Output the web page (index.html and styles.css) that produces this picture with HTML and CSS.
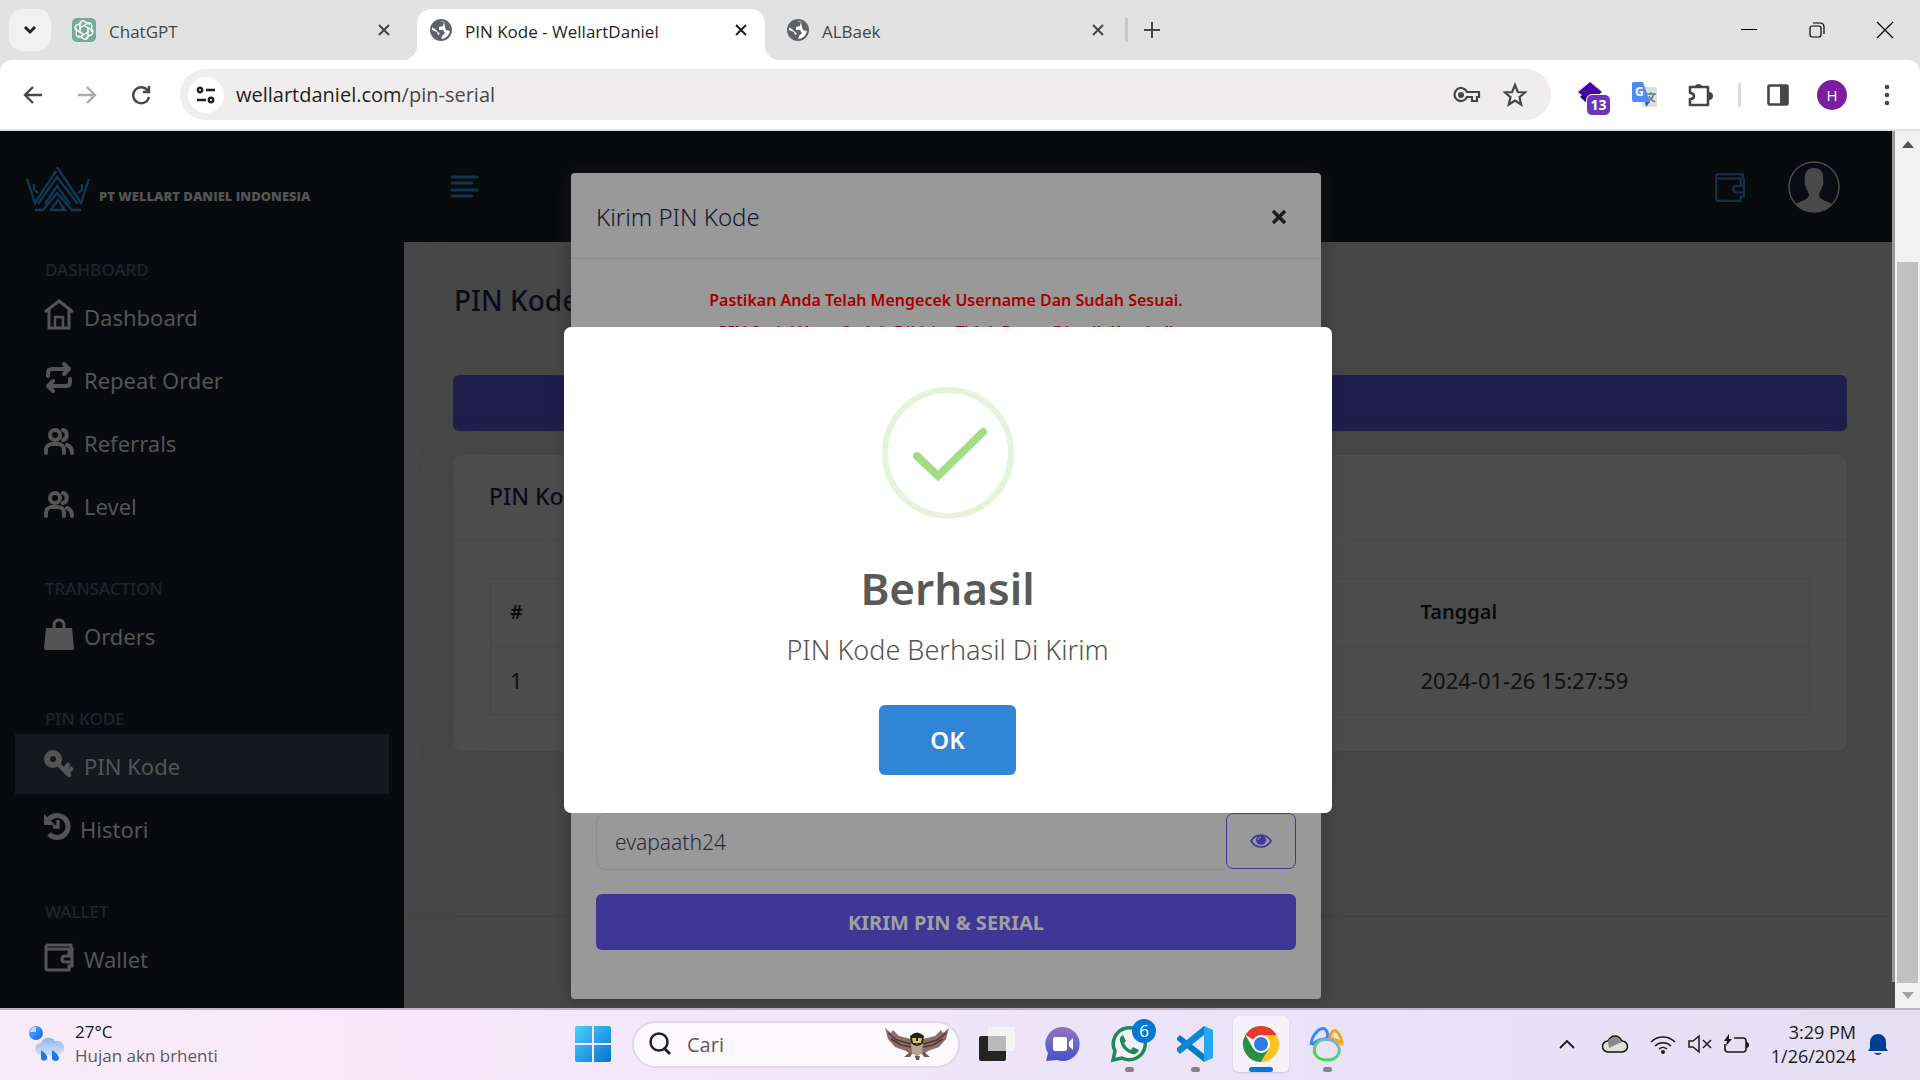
FILE: index.html
```html
<!DOCTYPE html>
<html lang="id">
<head>
<meta charset="utf-8">
<title>PIN Kode - WellartDaniel</title>
<link rel="stylesheet" href="styles.css">
</head>
<body>
<svg class="defs" width="0" height="0" aria-hidden="true">
  <symbol id="globe" viewBox="0 0 22 22"><circle cx="11" cy="11" r="10" fill="#fff" stroke="#5f6368" stroke-width="2"/><path d="M2 8C3 4 7 1 10 2L14 3 13 7 9 8 9 11 13 11 15 14 12 17 11 21C5 21 1 17 2 11L7 13 8 16 10 15 6 11ZM14 2C18 4 21 8 20 12L16 11 15 8Z" fill="#5f6368"/></symbol>
  <symbol id="cross" viewBox="0 0 20 20"><path d="M5 5 15 15M15 5 5 15" fill="none" stroke="currentColor" stroke-width="2"/></symbol>
  <symbol id="users" viewBox="0 0 30 28"><g fill="none" stroke="currentColor" stroke-width="4" stroke-linecap="round"><circle cx="11" cy="8" r="5"/><path d="M2 26v-3c0-4 3-6 6-6h6c3 0 6 2 6 6v3M19 3c5 1 5 9 0 10M23 18c3 1 5 3 5 8"/></g></symbol>
  <symbol id="wallet" viewBox="0 0 30 30"><path d="M27 7V3H4Q2 3 2 5V26Q2 28 4 28H25V24H28V7H2M25 8v6M28 14H21q-3 0-3 3t3 3h7" fill="none" stroke="currentColor"/></symbol>
</svg>

<header class="browser">
  <div class="tabstrip">
    <button class="tab-search" aria-label="Cari tab"><svg width="16" height="12" viewBox="0 0 16 12"><path d="M3 3 8 8 13 3" fill="none" stroke="#1f1f1f" stroke-width="3"/></svg></button>
    <div class="tab tab-first">
      <svg width="24" height="24" viewBox="0 0 24 24"><rect width="24" height="24" rx="5" fill="#75ab9b"/><g fill="none" stroke="#fff" stroke-width="1.4"><path id="petal" d="M12 7.5 8 9.800V5.500C8 2.500 12 1.800 13.600 4.200L17.500 6.500"/><use href="#petal" transform="rotate(60 12 12)"/><use href="#petal" transform="rotate(120 12 12)"/><use href="#petal" transform="rotate(180 12 12)"/><use href="#petal" transform="rotate(240 12 12)"/><use href="#petal" transform="rotate(300 12 12)"/></g></svg>
      <span class="tab-label">ChatGPT</span>
      <button class="tab-close" aria-label="Tutup"><svg width="20" height="20"><use href="#cross"/></svg></button>
    </div>
    <div class="tab tab-active">
      <svg width="22" height="22"><use href="#globe"/></svg>
      <span class="tab-label">PIN Kode - WellartDaniel</span>
      <button class="tab-close" aria-label="Tutup"><svg width="20" height="20"><use href="#cross"/></svg></button>
    </div>
    <div class="tab tab-last">
      <svg width="22" height="22"><use href="#globe"/></svg>
      <span class="tab-label">ALBaek</span>
      <button class="tab-close" aria-label="Tutup"><svg width="20" height="20"><use href="#cross"/></svg></button>
    </div>
    <span class="divider"></span>
    <button class="new-tab" aria-label="Tab baru"><svg width="18" height="18" viewBox="0 0 18 18"><path d="M9 1v16M1 9h16" stroke="#444746" stroke-width="2"/></svg></button>
    <div class="window-controls">
      <button aria-label="Kecilkan"><svg width="16" height="16" viewBox="0 0 16 16"><path d="M0 7.500h16" stroke="#000"/></svg></button>
      <button aria-label="Pulihkan"><svg width="16" height="16" viewBox="0 0 16 16"><g fill="none" stroke="#000" stroke-width="1.200"><rect x="1" y="4" width="11" height="11" rx="2"/><path d="M4 1H11Q15 1 15 5V12"/></g></svg></button>
      <button aria-label="Tutup jendela"><svg width="16" height="16" viewBox="0 0 16 16"><path d="M0 0 16 16M16 0 0 16" stroke="#000" stroke-width="1.200"/></svg></button>
    </div>
  </div>
  <div class="toolbar">
    <div class="nav-buttons">
      <button aria-label="Kembali"><svg width="20" height="20" viewBox="0 0 20 20"><path d="M19 10H3M10 2 2 10 10 18" fill="none" stroke="#444746" stroke-width="2.400"/></svg></button>
      <button aria-label="Maju"><svg width="20" height="20" viewBox="0 0 20 20"><path d="M1 10H17M10 2 18 10 10 18" fill="none" stroke="#ababab" stroke-width="2.400"/></svg></button>
      <button aria-label="Muat ulang"><svg width="20" height="20" viewBox="0 0 20 20"><path d="M17 6A8 8 0 1 0 18 12M18 1V7H12" fill="none" stroke="#444746" stroke-width="2.400"/></svg></button>
    </div>
    <div class="omnibox">
      <button class="site-info" aria-label="Info situs"><svg width="20" height="18" viewBox="0 0 20 18"><g fill="none" stroke="#1f1f1f" stroke-width="2.400"><circle cx="4" cy="4" r="2.200"/><path d="M10 4h9M1 14h9"/><circle cx="15" cy="14" r="2.200"/></g></svg></button>
      <div class="url">wellartdaniel.com<span>/pin-serial</span></div>
      <button aria-label="Sandi"><svg width="28" height="18" viewBox="0 0 28 18"><path d="M14 6H26V11H24V15H19V11H14A6.500 6.500 0 1 1 14 6Z" fill="none" stroke="#444746" stroke-width="2.200"/><circle cx="8" cy="9" r="3" fill="#444746"/></svg></button>
      <button aria-label="Markah"><svg width="24" height="24" viewBox="0 0 24 24"><path d="M12 2 14.800 9 22 9.500 16.500 14.200 18.200 21.500 12 17.500 5.800 21.500 7.500 14.200 2 9.500 9.200 9Z" fill="none" stroke="#444746" stroke-width="2.200"/></svg></button>
    </div>
    <div class="extensions">
      <button class="ext-badge" aria-label="Ekstensi"><svg width="26" height="26" viewBox="0 0 26 26"><path d="M2 15 12 24 22 15 20 13H4Z" fill="#200a63"/><path d="M12 0 24 10 12 20 0 10Z" fill="#4506a8"/></svg><span>13</span></button>
      <button aria-label="Terjemahan"><svg width="26" height="26" viewBox="0 0 26 26"><rect x="10" y="5" width="15" height="20" rx="1" fill="#dedede"/><path d="M15 12h9M19 10v2M22 12c-1 4-4 6-6 8M17 14c1 3 4 5 6 6" stroke="#607d8b" stroke-width="1.500" fill="none"/><path d="M1 0H11L18 20H2Q0 20 0 18V1Z" fill="#4f8df5"/><path d="M13 20H18L14 25Z" fill="#3757c4"/><text x="3" y="14" class="g-letter">G</text></svg></button>
      <button aria-label="Puzzle"><svg width="26" height="26" viewBox="0 0 26 26"><path d="M3 5H21V23H3V17Q7 17 7 14 7 11 3 11Z" fill="none" stroke="#444746" stroke-width="2.600" stroke-linejoin="round"/><path d="M8 4a4 4 0 0 1 7 0ZM22 10a4 4 0 0 1 0 8Z" fill="#444746"/></svg></button>
      <span class="divider"></span>
      <button aria-label="Panel samping"><svg width="22" height="22" viewBox="0 0 22 22"><rect x="1.500" y="1.500" width="19" height="19" rx="1" fill="none" stroke="#444746" stroke-width="2.600"/><path d="M13 1h8v20h-8z" fill="#444746"/></svg></button>
      <button class="profile" aria-label="Profil">H</button>
      <button aria-label="Menu"><svg width="6" height="22" viewBox="0 0 6 22"><g fill="#444746"><circle cx="3" cy="3" r="2.300"/><circle cx="3" cy="11" r="2.300"/><circle cx="3" cy="19" r="2.300"/></g></svg></button>
    </div>
  </div>
</header>

<div class="viewport">
  <div class="page">
    <nav class="sidebar">
      <a class="brand" href="#">
        <svg width="64" height="46" viewBox="0 0 64 46"><g fill="none" stroke="#103a54" stroke-width="2.300"><path d="M1 13 9 37 30 5M31 1 55 37 63 13"/><path d="M8 18V24L12 27M56 18V24L52 27"/><path d="M12 38 31 11 52 38M19 38 31 20 44 38"/><path d="M9 44H17L31 27 46 44H55M25 44 32 34 39 44Z"/></g></svg>
        <span>PT WELLART DANIEL INDONESIA</span>
      </a>
      <h6>DASHBOARD</h6>
      <ul>
        <li><a href="#"><svg width="30" height="32" viewBox="0 0 30 32"><g fill="none" stroke="currentColor" stroke-width="3"><path d="M1 13 15 2 29 13M5 11V29H25V11"/><path d="M11 29V18H19V29" stroke-width="2.500"/></g></svg>Dashboard</a></li>
        <li><a href="#"><svg width="30" height="32" viewBox="0 0 30 32"><g fill="none" stroke="currentColor" stroke-width="4" stroke-linecap="round" stroke-linejoin="round"><path d="M4 14V11Q4 7 8 7H25M20 2 25 7 20 12M26 17v3q0 4-4 4H4M9 19 4 24 9 29"/></g></svg>Repeat Order</a></li>
        <li><a href="#"><svg width="30" height="28"><use href="#users"/></svg>Referrals</a></li>
        <li><a href="#"><svg width="30" height="28"><use href="#users"/></svg>Level</a></li>
      </ul>
      <h6>TRANSACTION</h6>
      <ul>
        <li><a href="#"><svg width="30" height="32" viewBox="0 0 30 32"><path d="M2 10H28L30 30Q30 32 28 32H2Q0 32 0 30Z" fill="currentColor"/><path d="M10 14V8q0-6 5-6t5 6v6" fill="none" stroke="currentColor" stroke-width="3"/></svg>Orders</a></li>
      </ul>
      <h6>PIN KODE</h6>
      <ul>
        <li><a class="active" href="#"><svg width="30" height="32" viewBox="0 0 30 32"><g stroke="currentColor" fill="none"><circle cx="9" cy="11" r="6" stroke-width="6"/><path d="M14 16 25 27M21 21 24 17M24 24 27 21" stroke-width="4.500" stroke-linecap="round"/></g></svg>PIN Kode</a></li>
        <li><a href="#"><svg width="26" height="32" viewBox="0 0 26 32"><path d="M5 23A11 11 0 1 0 5 8" fill="none" stroke="currentColor" stroke-width="5"/><path d="M0 3V14H11Z" fill="currentColor"/><path d="M14 9v7H9" fill="none" stroke="currentColor" stroke-width="3.500"/></svg>Histori</a></li>
      </ul>
      <h6>WALLET</h6>
      <ul>
        <li><a href="#"><svg class="bold-icon" width="30" height="30"><use href="#wallet"/></svg>Wallet</a></li>
      </ul>
    </nav>

    <main class="content">
      <div class="topbar">
        <button aria-label="Menu"><svg width="28" height="24" viewBox="0 0 28 24"><path d="M1 2H26M1 8H21M1 15H26M1 21H21" stroke="#10354c" stroke-width="3" stroke-linecap="round"/></svg></button>
        <a class="topbar-wallet" href="#" aria-label="Wallet"><svg width="32" height="32"><use href="#wallet"/></svg></a>
        <a class="avatar" href="#" aria-label="Akun"><svg width="52" height="52" viewBox="0 0 52 52"><circle cx="26" cy="26" r="25" fill="#0b0b15" stroke="#4a4a4a" stroke-width="1.500"/><path d="M26 7C18 7 16 13 17 20 16 21 17 25 18 26 19 30 21 32 21 34 21 39 10 41 8 43A25 25 0 0 0 44 43C42 41 31 39 31 34 31 32 33 30 34 26 35 25 36 21 35 20 36 13 34 7 26 7Z" fill="#4a4a4a"/></svg></a>
      </div>
      <h1>PIN Kode</h1>
      <button class="send-bar" aria-label="Kirim PIN"></button>
      <section class="card">
        <h2>PIN Kode</h2>
        <div class="card-body">
          <table>
            <thead><tr><th class="col-num">#</th><th></th><th class="col-date">Tanggal</th></tr></thead>
            <tbody><tr><td>1</td><td></td><td>2024-01-26 15:27:59</td></tr></tbody>
          </table>
        </div>
      </section>
      <footer></footer>
    </main>

    <div class="layer">
      <section class="modal">
        <div class="modal-head"><h3>Kirim PIN Kode</h3><button class="modal-close" aria-label="Tutup"><svg width="20" height="20" viewBox="0 0 20 20"><path d="M4 4 16 16M16 4 4 16" stroke="#1c1c1c" stroke-width="3.500"/></svg></button></div>
        <div class="modal-body">
          <p class="warning">Pastikan Anda Telah Mengecek Username Dan Sudah Sesuai.<br>PIN Serial Yang Sudah Dikirim Tidak Dapat Ditarik Kembali</p>
          <div class="field">
            <input type="text" aria-label="Username" value="evapaath24">
            <button class="eye" aria-label="Cek username"><svg width="22" height="16" viewBox="0 0 22 16"><path d="M1 8C6 0 16 0 21 8 16 16 6 16 1 8Z" fill="none" stroke="#423799" stroke-width="1.700"/><circle cx="11" cy="7" r="5" fill="#423799"/><path d="M8 7q0-3 3-3" fill="none" stroke="#999"/></svg></button>
          </div>
          <button class="submit">KIRIM PIN &amp; SERIAL</button>
        </div>
      </section>
    </div>

    <div class="layer layer-center">
      <section class="alert" role="alertdialog" aria-label="Berhasil">
        <svg width="132" height="132" viewBox="0 0 132 132"><circle cx="66" cy="66" r="63" fill="none" stroke="#e4f4db" stroke-width="6"/><path d="M35 69 56 89 101 45" fill="none" stroke="#a5dc86" stroke-width="8" stroke-linecap="round"/></svg>
        <h2>Berhasil</h2>
        <p>PIN Kode Berhasil Di Kirim</p>
        <button>OK</button>
      </section>
    </div>
  </div>
  <div class="thin-track"><div></div></div>
  <div class="scrollbar">
    <svg width="12" height="8" viewBox="0 0 12 8"><path d="M0 7 6 0 12 7Z" fill="#505050"/></svg>
    <div class="thumb"></div>
    <svg width="12" height="8" viewBox="0 0 12 8"><path d="M0 0 6 7 12 0Z" fill="#a3a3a3"/></svg>
  </div>
</div>

<footer class="taskbar">
  <div class="weather">
    <svg width="38" height="38" viewBox="0 0 38 38"><defs><linearGradient id="cl" x2="0" y2="1"><stop stop-color="#8db4f0"/><stop offset="1" stop-color="#d3e1fa"/></linearGradient><linearGradient id="bl" x2="1" y2="1"><stop stop-color="#62b0ff"/><stop offset="1" stop-color="#0b60f0"/></linearGradient></defs><circle cx="8" cy="8" r="7" fill="url(#bl)"/><path d="M2 7Q3 2 8 2V7Z" fill="#b9e2fa"/><path d="M13 30a6 6 0 0 1 0-12A8 8 0 0 1 27 16a7 7 0 0 1 4 14Z" fill="url(#cl)"/><path d="M13 25C18 29 20 31 19 34a3.500 3.500 0 0 1-6 0ZM24 25C30 29 31 31 31 34a4 4 0 0 1-7 0Z" fill="#1a78ef"/></svg>
    <div><div>27°C</div><div class="muted">Hujan akn brhenti</div></div>
  </div>
  <div class="apps">
    <button aria-label="Mulai"><svg width="36" height="36" viewBox="0 0 36 36"><defs><linearGradient id="w" x2="1" y2="1"><stop stop-color="#4cd0fb"/><stop offset="1" stop-color="#0473d0"/></linearGradient></defs><path d="M2 0H17V17H0V2Q0 0 2 0ZM19 0H34Q36 0 36 2V17H19ZM0 19H17V36H2Q0 36 0 34ZM19 19H36V34Q36 36 34 36H19Z" fill="url(#w)"/></svg></button>
    <label class="search">
      <svg width="24" height="24" viewBox="0 0 24 24"><circle cx="11" cy="10" r="8.500" fill="none" stroke="#222" stroke-width="2.500"/><path d="M17 17 22 22" stroke="#222" stroke-width="3"/></svg>
      <input type="text" placeholder="Cari" aria-label="Cari">
      <svg width="64" height="34" viewBox="0 0 64 34"><path d="M0 1 6 6 8 3 14 9 26 12 32 8 38 12 50 9 56 3 58 6 64 1 61 12 54 20 43 24 39 27H25L21 24 10 20 3 12Z" fill="#8a7068"/><path d="M3 6 12 13 26 17M6 12 16 18 26 20M61 6 52 13 38 17M58 12 48 18 38 20" fill="none" stroke="#4d3732" stroke-width="1.500"/><path d="M26 15H38L37 26 32 30 27 26Z" fill="#b9a392"/><path d="M25 9Q32 2 39 9L38 16Q32 22 26 16Z" fill="#25201f"/><path d="M27 11h4v5h-3zM33 11h4l-1 5h-3z" fill="#d9c84b"/><path d="M31 14h2l-1 4Z" fill="#f5e6c0"/><path d="M25 25 19 30 25 30 27 27M39 25 45 30 39 30 37 27M30 29 31 33H34L35 29" fill="#745850"/></svg>
    </label>
    <button aria-label="Tampilan tugas"><svg width="36" height="34" viewBox="0 0 36 34"><rect y="9" width="27" height="25" rx="2" fill="#242424"/><rect x="9" width="27" height="24" rx="2" fill="#f4f4f4"/><path d="M9 9H27V24H9Z" fill="#b9b9b9"/></svg></button>
    <button aria-label="Obrolan"><svg width="34" height="35" viewBox="0 0 34 35"><defs><linearGradient id="ch" x2="0" y2="1"><stop stop-color="#9a70bd"/><stop offset=".5" stop-color="#6568cc"/><stop offset="1" stop-color="#4c50c4"/></linearGradient></defs><path d="M17 0a17 17 0 1 1-6 33L0 34 2 26A17 17 0 0 1 17 0Z" fill="url(#ch)"/><rect x="7" y="10" width="14" height="14" rx="2" fill="#fff"/><path d="M23 15 27 11V23L23 19Z" fill="#fff"/></svg></button>
    <button class="running" aria-label="WhatsApp"><svg width="38" height="38" viewBox="0 0 38 38"><path d="M3 35 5 26A16 16 0 1 1 12 33Z" fill="#f5f0fb" stroke="#1f8a55" stroke-width="3.500"/><path d="M13 10 16 16 14 18Q16 23 21 25L23 22 29 25Q27 30 22 29 12 26 10 16 9 12 13 10Z" fill="#1f8a55"/></svg><span class="count">6</span></button>
    <button class="running" aria-label="Visual Studio Code"><svg width="36" height="36" viewBox="0 0 36 36"><path d="M0 12 3 9 27 28V36L0 14Z" fill="#087bc6"/><path d="M0 25 3 28 27 9V0L0 22Z" fill="#0a86d4"/><path d="M27 0 36 4V32L27 36Z" fill="#27a6f0"/></svg></button>
    <button class="running current" aria-label="Chrome"><svg width="36" height="36" viewBox="0 0 36 36"><path d="M18 18 2.400 9A18 18 0 0 1 33.600 9Z" fill="#e33b2e"/><path d="M18 18V9H33.600A18 18 0 0 1 18 36L25.800 22.500Z" fill="#fcc31e"/><path d="M18 18 25.800 22.500 18 36A18 18 0 0 1 2.400 9L10.200 22.500Z" fill="#269145"/><circle cx="18" cy="18" r="9" fill="#fff"/><circle cx="18" cy="18" r="7" fill="#2d79ea"/></svg></button>
    <button class="running" aria-label="Navicat"><svg width="36" height="36" viewBox="0 0 36 36"><defs><linearGradient id="nv" x1=".2" y1="1" x2=".8" y2="0"><stop stop-color="#3fd63f"/><stop offset=".5" stop-color="#5fd08a"/><stop offset="1" stop-color="#7fa8e8"/></linearGradient></defs><g fill="none" stroke-width="3"><path d="M2 19C3 8 11 1 16 3 20 7 19 13 16 13 10 13 7 15 3 19" stroke="#3f86f7"/><path d="M33 19C33 11 28 3 24 5 20 9 20 13 24 13 28 14 31 16 33 19" stroke="#fba60c"/><path d="M9 16C1 25 7 34 18 34S34 25 27 17C23 13 13 12 9 16Z" stroke="url(#nv)"/></g></svg></button>
  </div>
  <div class="tray">
    <svg width="16" height="10" viewBox="0 0 16 10"><path d="M1 9 8 2 15 9" fill="none" stroke="#1b1b1b" stroke-width="1.800"/></svg>
    <svg class="cloud" width="26" height="18" viewBox="0 0 26 18"><path d="M6 17a5 5 0 0 1 0-11Q9 1 13 1T20 6A5.500 5.500 0 0 1 20 17Z" fill="#dedede" stroke="#111" stroke-width="1.500"/><path d="M6 6Q9 2 13 2T20 7L13 10 7 13Z" fill="#888"/></svg>
    <svg class="wifi" width="26" height="19" viewBox="0 0 26 19"><g fill="none" stroke="#1b1b1b" stroke-width="1.600"><path d="M1 7A17 17 0 0 1 25 7M5 11A11.500 11.500 0 0 1 21 11M9 14A6 6 0 0 1 17 14"/></g><circle cx="13" cy="17" r="2" fill="#1b1b1b"/></svg>
    <svg width="24" height="18" viewBox="0 0 24 18"><path d="M1 6H5L11 1V17L5 12H1ZM15 5 23 13M23 5 15 13" fill="none" stroke="#1b1b1b" stroke-width="1.500"/></svg>
    <svg width="26" height="20" viewBox="0 0 26 20"><path d="M10 4H19Q22 4 22 7V15Q22 18 19 18H4Q1 18 1 15V10" fill="none" stroke="#1b1b1b" stroke-width="1.600"/><path d="M5 0 0 7H3L2 12 8 5H5ZM22 8q3 0 3 3t-3 3Z" fill="#1b1b1b"/></svg>
    <div class="clock"><div>3:29 PM</div><div>1/26/2024</div></div>
    <svg width="20" height="24" viewBox="0 0 20 24"><path d="M2 10a8 8 0 0 1 16 0V16L20 19H0L2 16ZM6 21h8q-4 4-8 0Z" fill="#003e92"/></svg>
  </div>
</footer>
</body>
</html>
```
FILE: styles.css
```css
* { box-sizing: border-box; }
html, body { height: 100%; }
body {
  margin: 0;
  display: flex;
  flex-direction: column;
  overflow: hidden;
  font-family: "Noto Sans", "Open Sans", sans-serif;
}
button { font: inherit; border: 0; padding: 0; background: none; color: inherit; }
a { color: inherit; text-decoration: none; }
h1, h2, h3, h6, p, ul { margin: 0; padding: 0; }
ul { list-style: none; }
svg { display: block; flex: none; overflow: visible; }
.defs { position: absolute; }

/* Browser frame */
.browser { background: #e2e2e2; border-bottom: 2px solid #e1e3e1; font-family: "Open Sans", sans-serif; }
.tabstrip { display: flex; align-items: center; height: 60px; padding-left: 9px; }
.tab-search { width: 42px; height: 42px; border-radius: 14px; background: #f1f1f1; display: grid; place-items: center; }
.tab { display: flex; align-items: center; gap: 13px; height: 51px; align-self: flex-end; padding-bottom: 9px; font-size: 17px; color: #444746; }
.tab-label { flex: 1; padding-top: 3px; }
.tab-close { width: 20px; height: 20px; }
.tab-first { width: 366px; padding-left: 21px; padding-right: 23px; }
.tab-active { position: relative; width: 348px; padding-left: 13px; padding-right: 14px; background: #fff; border-radius: 14px 14px 0 0; color: #1f1f1f; }
.tab-active::before, .tab-active::after { content: ""; position: absolute; bottom: 0; width: 14px; height: 14px; }
.tab-active::before { right: 100%; background: radial-gradient(circle at 0 0, transparent 14px, #fff 14px); }
.tab-active::after { left: 100%; background: radial-gradient(circle at 100% 0, transparent 14px, #fff 14px); }
.tab-last { width: 360px; padding-left: 22px; padding-right: 17px; }
.divider { width: 3px; height: 24px; background: #c8c8c8; border-radius: 1px; }
.new-tab { margin-left: 15px; }
.window-controls { display: flex; gap: 52px; margin-left: auto; padding-right: 27px; }
.toolbar { display: flex; align-items: center; height: 69px; padding-right: 1px; background: #fff; border-radius: 12px 12px 0 0; }
.nav-buttons { display: flex; gap: 34px; padding: 0 29px 0 23px; }
.omnibox { flex: 1; display: flex; align-items: center; height: 51px; padding: 0 24px 0 8px; border-radius: 26px; background: #efedee; }
.site-info { width: 36px; height: 36px; border-radius: 50%; background: #fff; display: grid; place-items: center; margin-right: 12px; }
.url { flex: 1; font-size: 20px; color: #1f1f1f; }
.url span { color: #474747; }
.omnibox button + button { margin-left: 22px; }
.extensions { display: grid; grid-template-columns: 54px 48px 62px 16px 62px 46px 64px; place-items: center; margin-left: 16px; }
.extensions .divider { background: #dcdcdc; }
.ext-badge { position: relative; padding-right: 6px; }
.ext-badge span { position: absolute; left: 8px; top: 12px; width: 25px; height: 22px; border: 1px solid #fff; border-radius: 6px; background: #6b35bb; color: #fff; font-size: 14px; line-height: 20px; font-weight: 700; }
.g-letter { font: 700 12px "Open Sans", sans-serif; fill: #fff; }
.profile { width: 30px; height: 30px; border-radius: 50%; background: #7b1fa2; color: #fff; font-size: 15px; }

/* Web page */
.viewport { flex: 1; min-height: 0; display: flex; overflow: hidden; }
.page { position: relative; flex: 1; display: flex; overflow: hidden; background: #474747; }
.thin-track { width: 3px; background: #474747; }
.thin-track div { height: 97%; background: #999; }
.scrollbar { display: flex; flex-direction: column; align-items: center; justify-content: space-between; width: 25px; padding: 10px 0 8px; background: #f1f1f1; }
.scrollbar .thumb { flex: 1; align-self: stretch; margin: 113px 2px 9px; background: #c1c1c1; }

.sidebar { width: 404px; flex: none; background: #090a0d; color: #545454; box-shadow: 0 0 30px #46464b; }
.brand { display: flex; align-items: center; gap: 9px; padding: 33px 0 1px 26px; height: 84px; }
.brand span { font: 800 13px "Open Sans", sans-serif; padding-top: 14px; white-space: nowrap; }
.sidebar h6 { margin-top: 43px; padding-left: 45px; font-size: 17px; line-height: 24px; font-weight: 500; color: #1f242d; }
.sidebar ul { display: grid; gap: 3px; padding: 3px 15px 0; }
.sidebar li a { display: flex; align-items: center; gap: 10px; height: 60px; padding: 4px 0 0 29px; font-size: 22px; }
.sidebar li svg { margin-bottom: 4px; }
.sidebar .active { background: #15181c; }
.bold-icon { stroke-width: 3; }

.content { flex: 1; display: flex; flex-direction: column; }
.topbar { display: flex; align-items: center; height: 111px; padding: 0 52px 0 47px; background: #090a0d; }
.topbar-wallet { margin-left: auto; margin-right: 42px; color: #103247; stroke-width: 2; }
.content h1 { margin: 36px 49px 0 50px; font-size: 28px; line-height: 44px; font-weight: 500; color: #0b0c18; }
.send-bar { height: 56px; margin: 53px 45px 24px 49px; border-radius: 6px; background: #211d4b; }
.card { margin: 0 45px 0 49px; border-radius: 10px; background: #4c4c4c; box-shadow: 0 0 30px #454548; }
.card h2 { padding: 23px 36px 24px; border-bottom: 1px solid #464646; font-size: 23px; line-height: 37px; font-weight: 500; color: #0b0c18; }
.card-body { padding: 38px 37px 36px; }
table { width: 100%; border-collapse: collapse; border: 1px solid #464646; font-size: 22px; color: #101010; }
th, td { height: 68px; padding: 0 19px 2px; text-align: left; font-weight: 400; border-bottom: 1px solid #464646; }
th { font-size: 20px; font-weight: 600; color: #090a0d; }
.col-num { width: 200px; }
.col-date { width: 408px; }
.content footer { margin-top: 165px; border-top: 1px solid #404040; }

/* Dialogs laid over the page */
.layer { position: absolute; inset: 0; display: flex; justify-content: center; align-items: flex-start; padding-top: 42px; }
.layer-center { align-items: center; padding: 0 0 0 3px; }
.modal { width: 750px; background: #999; border-radius: 4px; box-shadow: 0 0 20px #2228; }
.modal-head { display: flex; align-items: center; justify-content: space-between; height: 86px; padding: 2px 32px 0 25px; border-bottom: 1px solid #8d8d8d; }
.modal-head h3 { font-size: 24px; font-weight: 300; color: #141732; }
.modal-body { padding: 25px 25px 49px; }
.warning { height: 529px; font-size: 16px; line-height: 32px; font-weight: 600; text-align: center; color: #a60000; }
.field { display: flex; height: 57px; margin-bottom: 24px; }
.field input { flex: 1; min-width: 0; border: 1px solid #8d8d8d; border-right: 0; border-radius: 10px 0 0 10px; background: none; padding: 0 18px; font: 300 21px "Noto Sans", sans-serif; color: #262c3a; }
.eye { display: grid; place-items: center; width: 70px; height: 56px; border: 1px solid #423799; border-radius: 7px; }
.submit { width: 100%; height: 56px; border-radius: 6px; background: #403695; color: #a0a0a0; font-size: 20px; font-weight: 700; }
.alert { display: flex; flex-direction: column; align-items: center; width: 768px; padding: 60px 0 38px; border-radius: 7px; background: #fff; color: #595959; }
.alert h2 { margin-top: 35px; font-size: 44px; line-height: 68px; font-weight: 600; }
.alert p { margin: 8px 0 35px; font-size: 27px; line-height: 40px; font-weight: 300; color: #545454; }
.alert button { width: 137px; height: 70px; border-radius: 6px; background: #3085d6; color: #fff; font-size: 24px; font-weight: 600; }

/* Taskbar */
.taskbar { display: grid; grid-template-columns: 1fr auto 1fr; align-items: center; height: 72px; padding-bottom: 2px; border-top: 2px solid #bdb2c3; background: linear-gradient(90deg, #f8ebf9, #f9e8fa 20%, #efe6f9 45%, #e8e1f8 75%, #e5dff4); font-family: "Open Sans", sans-serif; font-size: 17px; line-height: 24px; color: #1b1b1b; }
.weather { display: flex; align-items: center; gap: 9px; padding-left: 28px; }
.muted { color: #5d5963; }
.apps { display: flex; align-items: center; }
.apps button { position: relative; display: grid; place-items: center; width: 66px; height: 56px; }
.search { display: flex; align-items: center; width: 328px; height: 47px; margin: 0 4px 0 6px; padding: 0 9px 0 14px; border: 2px solid #e0d7e8; border-radius: 24px; background: #fcf9fe; }
.search input { flex: 1; min-width: 0; border: 0; background: none; padding: 0 0 0 15px; font: 20px "Open Sans", sans-serif; }
.search input::placeholder { color: #5c5a60; }
.running::after { content: ""; position: absolute; bottom: 0; width: 9px; height: 5px; border-radius: 3px; background: #87818e; }
.current::before { content: ""; position: absolute; z-index: -1; inset: 0 5px; border-radius: 6px; background: #f6f2fc; box-shadow: 0 1px 2px #cfc5dc; }
.current { z-index: 0; }
.current::after { width: 24px; background: #0078d4; }
.count { position: absolute; right: 6px; top: 3px; width: 24px; height: 24px; border-radius: 50%; background: #0078d4; color: #fff; font-size: 17px; }
.tray { display: flex; align-items: center; justify-content: flex-end; gap: 12px; padding-right: 32px; }
.cloud { margin-left: 15px; }
.wifi { margin-left: 10px; }
.clock { width: 94px; text-align: right; font-size: 18px; }
```
